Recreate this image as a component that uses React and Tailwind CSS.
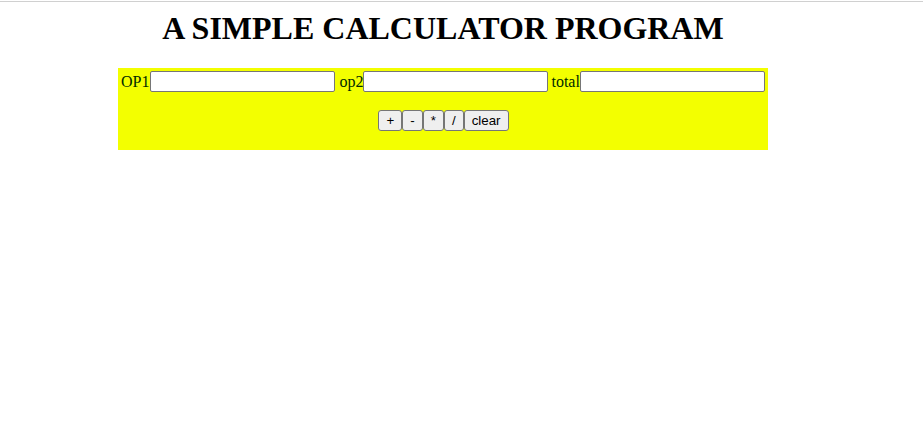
import React from "react";

export default function App() {
  const btn =
    "h-[21px] px-[7px] bg-[#efefef] border border-[#767676] rounded-[3px] text-[13.33px] leading-none text-black font-['Liberation_Sans',Arial,sans-serif]";
  const input =
    "w-[185px] h-[21px] bg-white border border-[#767676] rounded-[2px]";
  const label = "text-[16px] leading-none text-[#002a00]";
  return (
    <div className="w-[923px] min-h-[423px] bg-white font-['Liberation_Serif','Times_New_Roman',serif]">
      <div className="pt-px">
        <div className="h-px bg-[#d0d0d0]" />
      </div>
      <div className="w-[886px]">
        <h1 className="mt-[8px] text-center text-[32px] font-bold leading-[normal] text-black">
          A SIMPLE CALCULATOR PROGRAM
        </h1>
        <div className="ml-[118px] mt-[21px] w-[650px] h-[82px] bg-[#f3ff00] pl-[3px] pt-[3px]">
          <div className="flex items-center h-[21px]">
            <span className={label}>OP1</span>
            <input className={`${input} ml-px`} type="text" />
            <span className={`${label} ml-[4px]`}>op2</span>
            <input className={input} type="text" />
            <span className={`${label} ml-[3px]`}>total</span>
            <input className={input} type="text" />
          </div>
          <div className="mt-[18px] flex justify-center pr-[3px] pl-[1px]">
            <button className={btn}>+</button>
            <button className={btn}>-</button>
            <button className={btn}>*</button>
            <button className={btn}>/</button>
            <button className={btn}>clear</button>
          </div>
        </div>
      </div>
    </div>
  );
}
